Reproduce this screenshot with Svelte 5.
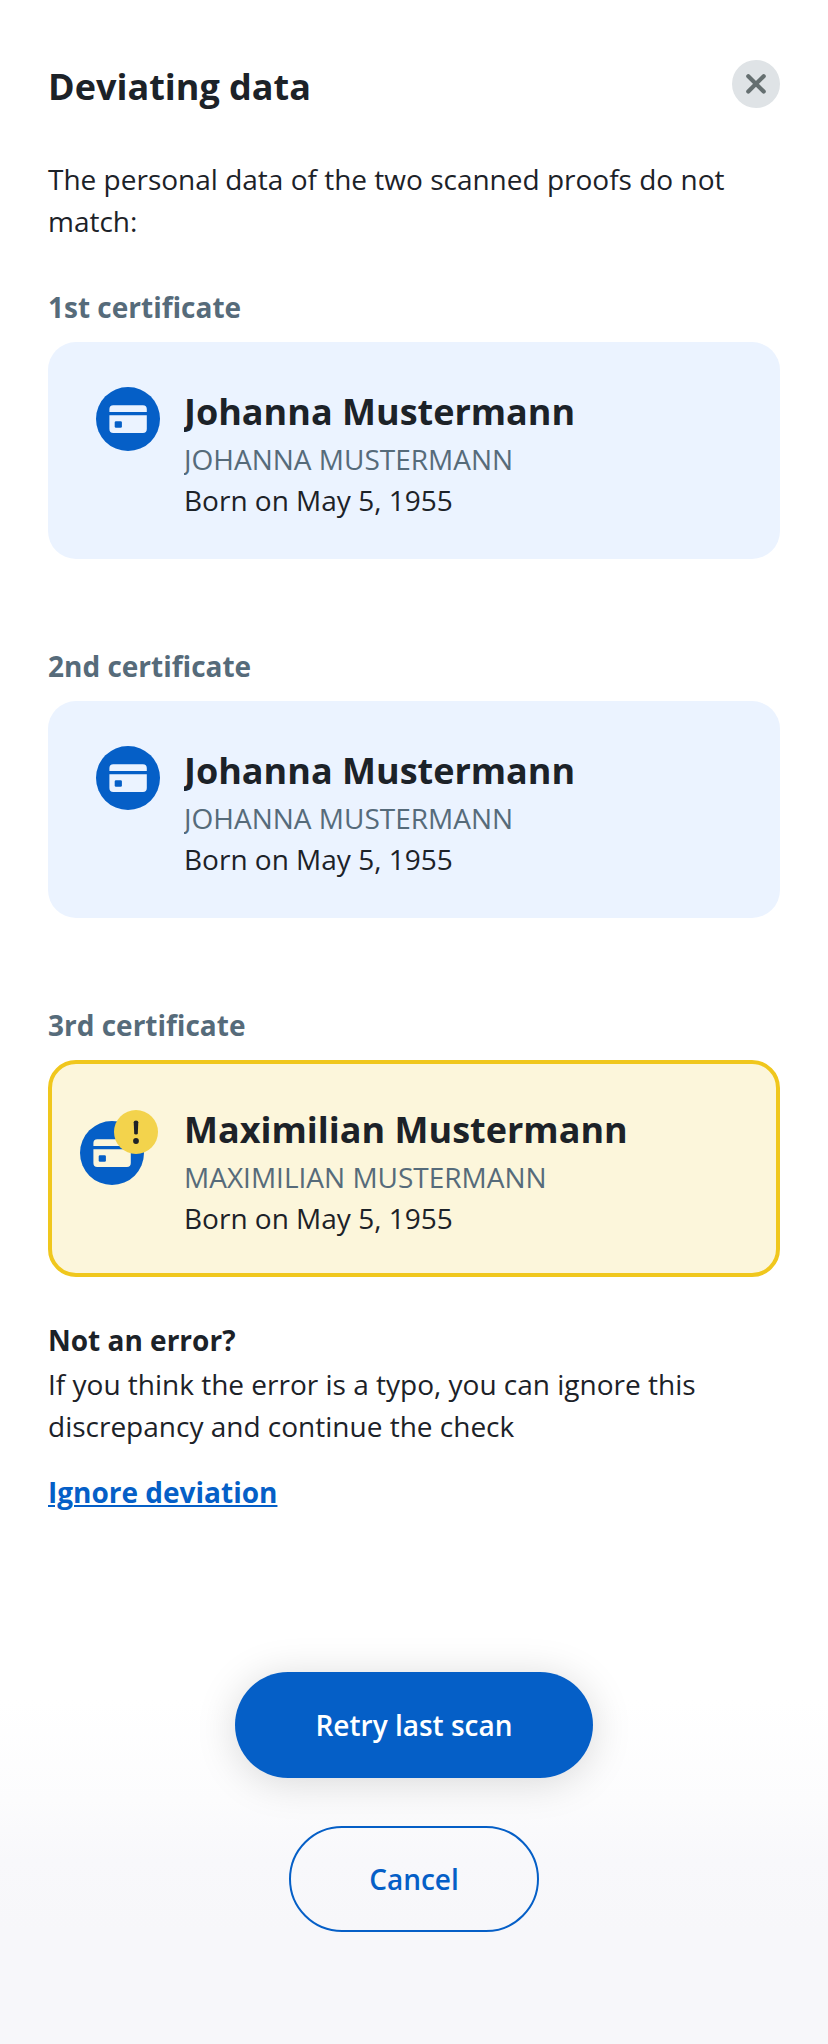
<script>
  const people = [
    { label: '1st certificate', name: 'Johanna Mustermann', upper: 'JOHANNA MUSTERMANN', warn: false },
    { label: '2nd certificate', name: 'Johanna Mustermann', upper: 'JOHANNA MUSTERMANN', warn: false },
    { label: '3rd certificate', name: 'Maximilian Mustermann', upper: 'MAXIMILIAN MUSTERMANN', warn: true }
  ];
</script>

<main>
  <header>
    <h1>Deviating data</h1>
    <button class="close" aria-label="Close">
      <svg width="48" height="48" viewBox="0 0 48 48"><path d="M16.3 16.2L31.7 31.6M31.7 16.2L16.3 31.6" stroke="#656f70" stroke-width="4.2" stroke-linecap="round" fill="none" /></svg>
    </button>
  </header>
  <p class="intro">The personal data of the two scanned proofs do not match:</p>
  <div class="certificates">
    {#each people as p}
      <section>
        <h2>{p.label}</h2>
        <div class="card" class:warn={p.warn}>
          <div class="icon">
            <svg width="64" height="64" viewBox="0 0 64 64">
              <circle cx="32" cy="32" r="32" fill="#055fc7" />
              <path d="M17.3 18.2H46.9Q50.8 18.2 50.8 22.1V24.9H13.4V22.1Q13.4 18.2 17.3 18.2ZM13.4 28.3H50.8V42Q50.8 45.9 46.9 45.9H17.3Q13.4 45.9 13.4 42Z" fill={p.warn ? '#fcf6db' : '#ebf3ff'} />
              <rect x="18.7" y="34.3" width="7.2" height="6.4" rx="1.3" fill="#055fc7" />
            </svg>
            {#if p.warn}
              <span class="badge">
                <svg width="44" height="44" viewBox="0 0 44 44">
                  <circle cx="22" cy="22" r="22" fill="#f3d34c" />
                  <path d="M19.7 12.3Q19.7 10.4 22 10.4Q24.3 10.4 24.3 12.3L23.8 23.2Q23.7 24.6 22 24.6Q20.3 24.6 20.2 23.2Z" fill="#1e2227" />
                  <circle cx="22" cy="31" r="2.9" fill="#1e2227" />
                </svg>
              </span>
            {/if}
          </div>
          <div class="info">
            <h3>{p.name}</h3>
            <p class="upper">{p.upper}</p>
            <p>Born on May 5, 1955</p>
          </div>
        </div>
      </section>
    {/each}
  </div>
  <div class="note">
    <h4>Not an error?</h4>
    <p>If you think the error is a typo, you can ignore this discrepancy and continue the check</p>
    <a href="#ignore">Ignore deviation</a>
  </div>
  <footer>
    <button class="primary">Retry last scan</button>
    <button class="secondary">Cancel</button>
  </footer>
</main>

<style>
  :global(body) { background: #fff; }
  main { box-sizing: border-box; width: 828px; height: 2044px; padding: 60px 48px 0; font: 28px/42px "Open Sans", sans-serif; color: #1c2228; background: linear-gradient(#fff 1700px, #fcfcfd 1800px, #f8f8fb 1860px, #f7f7fa 1930px); overflow: hidden; }
  h1, h2, h3, h4, p { margin: 0; }
  button { font: 600 28px/42px "Open Sans", sans-serif; padding: 0; }
  header { display: flex; justify-content: space-between; height: 98px; }
  h1 { font-size: 36px; line-height: 53px; }
  .close { width: 48px; height: 48px; border: 0; border-radius: 50%; background: #dfe3e6; }
  .close svg { display: block; }
  .intro { height: 128px; }
  .certificates { display: flex; flex-direction: column; gap: 86px; }
  h2 { font-size: 28px; line-height: 42px; color: #566b7a; height: 56px; }
  .card { box-sizing: border-box; display: flex; height: 217px; padding: 45px 48px 32px; gap: 24px; border-radius: 28px; background: #ebf3ff; }
  .warn { background: #fcf6db; border: 4px solid #f0c71d; padding: 41px 44px 28px; }
  .icon { position: relative; width: 64px; height: 64px; flex: none; }
  .icon svg { display: block; }
  .warn .icon { left: -16px; top: 16px; }
  .badge { position: absolute; left: 34px; top: -11.5px; }
  .info { flex: 1; min-width: 0; overflow-x: clip; }
  h3 { font-size: 36px; line-height: 49px; margin-bottom: 2px; }
  .upper { height: 41px; color: #566b7a; }
  .note { margin-top: 42px; }
  .note h4 { font-size: 28px; line-height: 42px; margin-bottom: 2px; }
  .note a { display: block; margin-top: 24px; font-weight: 700; color: #055fc7; text-decoration-thickness: 2px; text-underline-offset: 2px; }
  footer { display: flex; flex-direction: column; align-items: center; gap: 48px; margin-top: 159px; }
  footer button { height: 106px; border-radius: 53px; }
  .primary { width: 358px; border: 0; color: #fff; background: #055fc7; box-shadow: 0 4px 40px rgba(0, 0, 0, 0.15); }
  .secondary { width: 250px; border: 2px solid #055fc7; color: #055fc7; background: transparent; }
</style>
